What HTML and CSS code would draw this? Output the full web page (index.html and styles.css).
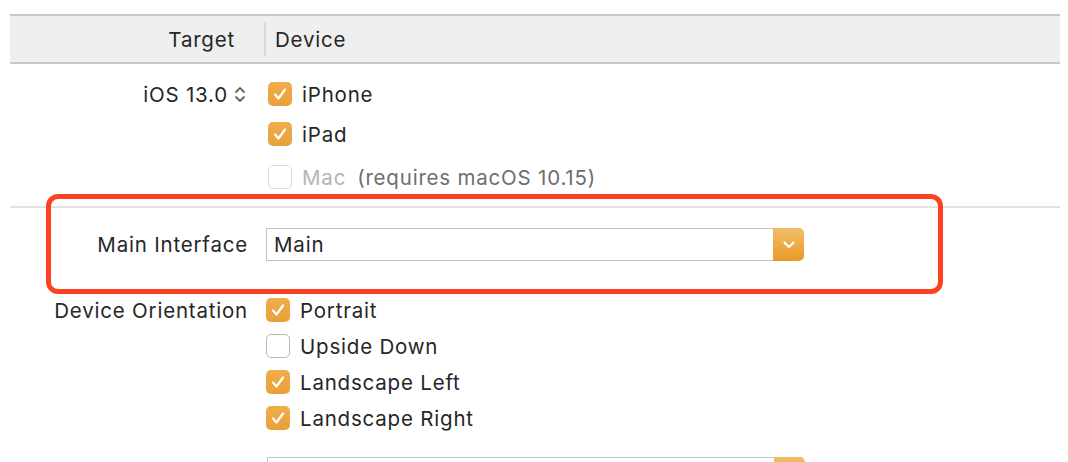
FILE: index.html
```html
<!DOCTYPE html>
<html>
<head>
<meta charset="utf-8">
<link rel="stylesheet" href="styles.css">
</head>
<body>
<div class="page">
  <div class="header">
    <div class="h-label">Target</div>
    <div class="h-div"></div>
    <div class="h-device">Device</div>
  </div>

  <div class="devices">
    <div class="row">
      <div class="label ios">iOS 13.0
        <svg class="stepper" width="12" height="19" viewBox="0 0 12 19"><path d="M2 7 L6 3 L10 7 M2 12 L6 16 L10 12" fill="none" stroke="#666" stroke-width="1.8" stroke-linecap="round" stroke-linejoin="round"/></svg>
      </div>
      <div class="ctl shift">
        <span class="cb on"><svg width="24" height="24" viewBox="0 0 24 24"><path d="M7 12.5 L10.5 16.5 L17 7.5" fill="none" stroke="#fff" stroke-width="2.2" stroke-linecap="round" stroke-linejoin="round"/></svg></span>
        <span class="txt">iPhone</span>
      </div>
    </div>
    <div class="row r2">
      <div class="label"></div>
      <div class="ctl shift">
        <span class="cb on"><svg width="24" height="24" viewBox="0 0 24 24"><path d="M7 12.5 L10.5 16.5 L17 7.5" fill="none" stroke="#fff" stroke-width="2.2" stroke-linecap="round" stroke-linejoin="round"/></svg></span>
        <span class="txt">iPad</span>
      </div>
    </div>
    <div class="row r3">
      <div class="label"></div>
      <div class="ctl shift">
        <span class="cb off disabled"></span>
        <span class="txt dim">Mac</span>
        <span class="txt note">(requires macOS 10.15)</span>
      </div>
    </div>
  </div>

  <div class="sep"></div>

  <div class="main-sec">
    <div class="row combo-row">
      <div class="label">Main Interface</div>
      <div class="ctl">
        <div class="combo">
          <div class="field">Main</div>
          <div class="popup"><svg width="16" height="10" viewBox="0 0 16 10"><path d="M3.5 2.5 L8 7 L12.5 2.5" fill="none" stroke="#fff" stroke-width="2.2" stroke-linecap="round" stroke-linejoin="round"/></svg></div>
        </div>
      </div>
    </div>
    <div class="annot"></div>
  </div>

  <div class="orient">
    <div class="row orow">
      <div class="label">Device Orientation</div>
      <div class="ctl">
        <span class="cb on"><svg width="24" height="24" viewBox="0 0 24 24"><path d="M7 12.5 L10.5 16.5 L17 7.5" fill="none" stroke="#fff" stroke-width="2.2" stroke-linecap="round" stroke-linejoin="round"/></svg></span>
        <span class="txt">Portrait</span>
      </div>
    </div>
    <div class="row orow">
      <div class="label"></div>
      <div class="ctl">
        <span class="cb off"></span>
        <span class="txt">Upside Down</span>
      </div>
    </div>
    <div class="row orow">
      <div class="label"></div>
      <div class="ctl">
        <span class="cb on"><svg width="24" height="24" viewBox="0 0 24 24"><path d="M7 12.5 L10.5 16.5 L17 7.5" fill="none" stroke="#fff" stroke-width="2.2" stroke-linecap="round" stroke-linejoin="round"/></svg></span>
        <span class="txt">Landscape Left</span>
      </div>
    </div>
    <div class="row orow">
      <div class="label"></div>
      <div class="ctl">
        <span class="cb on"><svg width="24" height="24" viewBox="0 0 24 24"><path d="M7 12.5 L10.5 16.5 L17 7.5" fill="none" stroke="#fff" stroke-width="2.2" stroke-linecap="round" stroke-linejoin="round"/></svg></span>
        <span class="txt">Landscape Right</span>
      </div>
    </div>
  </div>

  <div class="row bottom-row">
    <div class="label"></div>
    <div class="ctl">
      <div class="combo">
        <div class="field"></div>
        <div class="popup"></div>
      </div>
    </div>
  </div>
</div>
</body>
</html>
```

FILE: styles.css
```css
* { box-sizing: border-box; }
html, body { margin: 0; padding: 0; background: #fff; }
body {
  font-family: Inter, "Liberation Sans", sans-serif;
  font-size: 20.5px;
  letter-spacing: 0.8px;
  color: #262626;
  width: 1068px;
  height: 462px;
  overflow: hidden;
}
.page { padding-top: 14px; }

.header {
  margin-left: 10px;
  width: 1050px;
  height: 50px;
  background: #efefef;
  border-top: 2px solid #c8c8c8;
  border-bottom: 2px solid #c8c8c8;
  display: flex;
  align-items: center;
}
.h-label { width: 225px; text-align: right; }
.h-div { width: 2px; height: 33px; background: #d6d6d6; margin-left: 29px; }
.h-device { margin-left: 9px; }

.row { display: flex; align-items: center; height: 24px; }
.label {
  width: 250px;
  flex: none;
  text-align: right;
  padding-right: 2px;
  white-space: nowrap;
}
.ctl { margin-left: 16px; display: flex; align-items: center; }
.ctl.shift { margin-left: 18px; }

.ios { display: flex; justify-content: flex-end; align-items: center; padding-right: 4px; }
.stepper { margin-left: 6px; }

.devices { padding-top: 18px; }
.r2 { margin-top: 16px; }
.r3 { margin-top: 19px; }

.cb {
  width: 24px; height: 24px;
  border-radius: 5px;
  flex: none;
  display: inline-block;
}
.cb svg { display: block; }
.cb.on { background: linear-gradient(#efad4a, #e9a03a); }
.cb.off { background: #fff; border: 1px solid #b9b9b9; }
.cb.off.disabled { border-color: #dcdcdc; }
.txt { margin-left: 10px; white-space: nowrap; }
.txt.dim { color: #b4b4b4; }
.txt.note { color: #6e6e6e; margin-left: 11px; }

.sep { margin: 17px 0 0 10px; width: 1050px; height: 2px; background: #e3e3e3; }

.main-sec { position: relative; padding-top: 20px; }
.combo-row { height: 33px; }
.combo { display: flex; width: 538px; height: 33px; }
.field {
  flex: 1;
  border: 1px solid #c4c4c4;
  border-right: none;
  padding-left: 7px;
  display: flex;
  align-items: center;
  background: #fff;
}
.popup {
  width: 31px;
  flex: none;
  border-radius: 0 5px 5px 0;
  background: linear-gradient(#f1bd6a, #eb9a25);
  display: flex;
  align-items: center;
  justify-content: center;
}
.annot {
  position: absolute;
  left: 46px;
  top: -14px;
  width: 897px;
  height: 100px;
  border: 5px solid #fc4220;
  border-radius: 12px;
}

.orient { padding-top: 37px; }
.orow + .orow { margin-top: 12px; }

.bottom-row { margin-top: 27px; height: 33px; align-items: flex-start; }
.bottom-row .ctl { margin-left: 17px; }
```
